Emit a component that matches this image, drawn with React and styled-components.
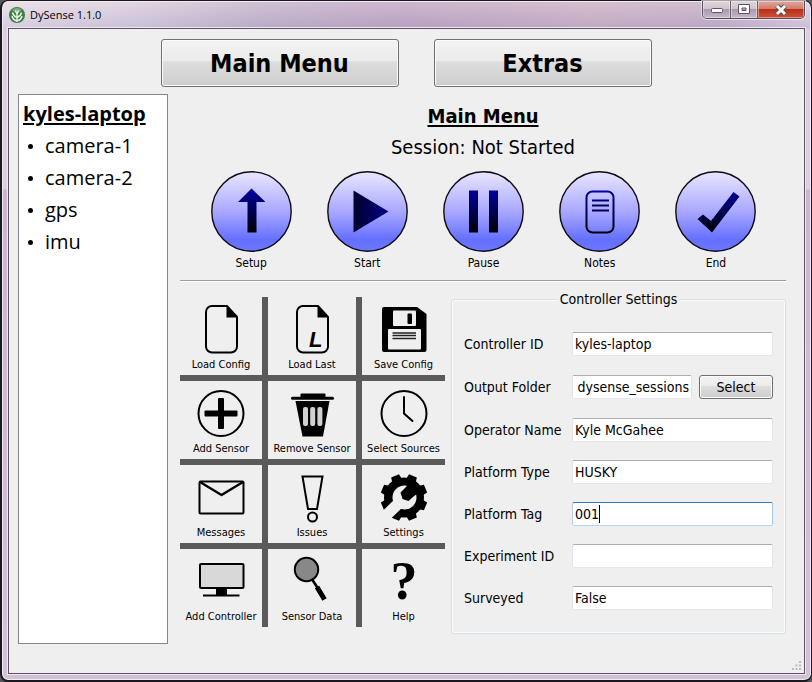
import React, { useId } from 'react';
import styled, { createGlobalStyle, css } from 'styled-components';

const tahoma = '"DejaVu Sans Condensed", "DejaVu Sans", Tahoma, sans-serif';
const segoe = '"Open Sans", "Noto Sans", "Segoe UI", sans-serif';
const face = '#efefef';
const rule = '#5a5a5a';

const GlobalStyle = createGlobalStyle`
  *, *::before, *::after { box-sizing: border-box; }
  body { margin: 0; background: #55585a; font-family: ${tahoma}; color: #000; }
  button, input { font-family: inherit; color: inherit; }
`;

const Window = styled.div`
  display: flex;
  flex-direction: column;
  min-height: 100vh;
  padding: 0 6px 6px;
  border: 1px solid #1c1820;
  border-width: 1px 1px 2px 2px;
  border-radius: 8px;
  box-shadow: inset 0 0 0 1px #f1eaf3;
  background:
    linear-gradient(180deg, rgba(255, 240, 245, 0.3), rgba(170, 160, 205, 0.25)) top / 100% 28px no-repeat,
    linear-gradient(90deg, #e4dce6 0, #d5cbd9 16%, #bcaec5 32%, #b9a0bd 50%, #c6abbd 72%, #bfa9bf 88%, #d6cadd 100%) top / 100% 28px no-repeat,
    linear-gradient(180deg, #dccfe0 0, #dccfe0 188px, #cbb6cf 189px, #d3c2d7 100%);
`;

const TitleBar = styled.header`
  display: flex;
  align-items: flex-start;
  justify-content: space-between;
  height: 27px;
`;

const Caption = styled.h1`
  display: flex;
  align-items: center;
  gap: 5px;
  height: 27px;
  margin: 0;
  padding-left: 1px;
  font: 400 11px/16px ${segoe};
`;

const Controls = styled.div`
  display: flex;
  height: 18px;
  border: 1px solid #544a58;
  border-top: 0;
  border-radius: 0 0 5px 5px;
  box-shadow: 0 0 0 1px rgba(255, 255, 255, 0.6);
  overflow: hidden;
`;

const ControlButton = styled.button`
  display: grid;
  place-items: center;
  width: ${(p) => (p.$close ? 47 : 27)}px;
  padding: 0;
  border: 0;
  border-left: ${(p) => (p.$first ? '0' : '1px solid #6a5f6e')};
  box-shadow: inset 0 0 0 1px rgba(255, 255, 255, 0.4);
  background: ${(p) =>
    p.$close
      ? 'linear-gradient(#e0aaa0 0, #d2786a 48%, #b8301a 50%, #cf5038 100%)'
      : 'linear-gradient(#e2d6dc 0, #cfc2cd 48%, #a99bac 50%, #c3b7cc 100%)'};
`;

const Client = styled.main`
  display: flex;
  flex: 1;
  flex-direction: column;
  gap: 7px;
  padding: 10px 18px 29px 9px;
  position: relative;
  border: 1px solid #5f5265;
  box-shadow: 0 0 0 1px #efe8f2;
  background: ${face};
`;

const PushButton = styled.button`
  border: 1px solid #707070;
  border-radius: 3px;
  padding: 0;
  box-shadow: inset 0 0 0 1px #fbfbfb;
  background: linear-gradient(#f3f3f3 0, #ebebeb 46%, #dddddd 47%, #cecece 100%);
  font-size: 14px;
`;

const Tabs = styled.nav`
  display: flex;
  justify-content: center;
  gap: 35px;
  padding-left: 8px;
`;

const TabButton = styled(PushButton)`
  width: ${(p) => p.$width}px;
  height: 48px;
  font-size: 25px;
  font-weight: 700;
`;

const Body = styled.div`
  display: flex;
  flex: 1;
  gap: 12px;
`;

const DevicePanel = styled.aside`
  width: 150px;
  padding: 3px 4px;
  border: 1px solid #828790;
  background: #fff;
  font: 400 20px/32px ${segoe};
`;

const DeviceHost = styled.h2`
  margin: 0;
  font-size: 20px;
  line-height: 32px;
  font-weight: 700;
  text-decoration: underline;
  text-decoration-thickness: 2px;
  text-underline-offset: 2px;
`;

const DeviceList = styled.ul`
  margin: 0;
  padding: 0;
  list-style: none;
`;

const Device = styled.li`
  display: flex;
  align-items: center;
  gap: 12px;
  padding-left: 5px;

  &::before {
    content: '';
    width: 5px;
    height: 5px;
    border-radius: 50%;
    background: #000;
  }
`;

const Content = styled.section`
  flex: 1;
  min-width: 0;
  padding-top: 8px;
`;

const Heading = styled.h2`
  margin: 0;
  font-size: 20px;
  line-height: 28px;
  text-align: center;
  text-decoration: underline;
  text-decoration-thickness: 2px;
  text-underline-offset: 2px;
`;

const Status = styled.p`
  margin: 0;
  font-size: 20px;
  line-height: 34px;
  text-align: center;
`;

const ActionRow = styled.div`
  display: grid;
  grid-template-columns: repeat(5, 1fr);
  padding: 7px 12px 8px 13px;
`;

const ActionButton = styled.button`
  display: flex;
  flex-direction: column;
  align-items: center;
  gap: 2px;
  padding: 0;
  border: 0;
  background: none;
  font-size: 12px;
  line-height: 18px;

  svg { display: block; }
`;

const Divider = styled.hr`
  height: 2px;
  margin: 0 0 8px;
  border: 0;
  border-top: 1px solid #9c9c9c;
  background: #fdfdfd;
`;

const Lower = styled.div`
  display: flex;
  align-items: flex-start;
  gap: 6px;
`;

const MenuGrid = styled.div`
  display: grid;
  grid-template-columns: 82px 88px 83px;
  gap: 6px;
  margin-top: 7px;
  background: ${rule};
`;

const MenuButton = styled.button`
  display: flex;
  flex-direction: column;
  align-items: center;
  gap: 2px;
  height: 78px;
  padding: 8px 0 0;
  border: 0;
  background: ${face};
  font-size: 11px;
  line-height: 16px;
  white-space: nowrap;

  svg { display: block; overflow: visible; }
`;

const Group = styled.fieldset`
  flex: 1;
  min-width: 0;
  margin: 0;
  padding: 24px 12px 23px;
  border: 1px solid #d5dfe5;
  border-radius: 3px;
  box-shadow: inset 0 0 0 1px #fcfcfc;
`;

const GroupTitle = styled.legend`
  margin: 0 auto;
  padding: 0 3px;
  background: ${face};
  font-size: 14px;
  line-height: 18px;
`;

const Form = styled.div`
  display: grid;
  grid-template-columns: auto 1fr;
  grid-template-rows: 24px 26px;
  grid-auto-rows: 24px;
  align-items: center;
  gap: 18px 6px;
`;

const FieldLabel = styled.label`
  min-width: 102px;
  font-size: 14px;
  line-height: 24px;
  white-space: nowrap;
`;

const FieldRow = styled.div`
  display: flex;
  gap: 7px;
  min-width: 0;
`;

const caret = css`
  border-color: #3d7bad #a4c9e3 #b7d9ed #b5cfe7;
  background: linear-gradient(#000, #000) 26px 2px / 1px 18px no-repeat #fff;
`;

const TextBox = styled.input`
  flex: 1;
  width: 100%;
  min-width: 0;
  height: 24px;
  padding: 0 2px;
  border: 1px solid;
  border-color: #abadb3 #e2e3ea #e3e9ef #e2e3ea;
  border-radius: 2px;
  outline: 0;
  background: #fff;
  font-size: 14px;
  text-align: ${(p) => (p.$end ? 'right' : 'left')};
  ${(p) => p.$active && caret}
`;

const SelectButton = styled(PushButton)`
  width: 74px;
  height: 24px;
`;

const Grip = styled.svg`
  position: absolute;
  right: 2px;
  bottom: 2px;
`;

const AppIcon = () => (
  <svg width="16" height="16" viewBox="0 0 16 16" aria-hidden="true">
    <circle cx="8" cy="8" r="8" fill="#3f7d46" />
    <path d="M3 3a8 8 0 0 1 10 0L8 7z" fill="#7fae80" />
    <path d="M8 15V6M8 14C5 13 3.500 11.500 3 9M8 14c3-1 4.500-2.500 5-5M8 10.500C5.500 9.500 4 8 3.500 5.500M8 10.500c2.500-1 4-2.500 4.500-5M8 7L6.500 3.500M8 7l1.500-3.500" fill="none" stroke="#e3efe2" strokeWidth="1.500" />
  </svg>
);

const glyphs = {
  Setup: (f) => <path d="M40.500 17.500L54.500 31H45.500V61.500H36.500V31H27z" fill={f} />,
  Start: (f) => <path d="M26.500 19.500L61.500 40.500L26.500 61.500z" fill={f} />,
  Pause: (f) => <path d="M26 19.500h9v42h-9zM46 19.500h9v42h-9z" fill={f} />,
  Notes: (f) => (
    <>
      <rect x="27.500" y="20.500" width="27" height="41" rx="6" fill="none" stroke={f} strokeWidth="2" />
      <path d="M33 28.500h17v2H33zM33 33.500h17v2H33zM33 38.500h17v2H33z" fill={f} />
    </>
  ),
  End: (f) => <path d="M22.500 48L28 43.500L36 50L58.500 21L64.500 25.500L37 61.500z" fill={f} />,
};

function RoundIcon({ name }) {
  const id = useId();
  const across = name === 'Start';
  return (
    <svg width="81" height="81" viewBox="0 0 81 81" aria-hidden="true">
      <defs>
        <linearGradient id={`${id}b`} x1="0" y1="0" x2="0" y2="1">
          <stop offset="0" stopColor="#e9e6ff" />
          <stop offset="0.5" stopColor="#a9a8ff" />
          <stop offset="0.85" stopColor="#6570ff" />
          <stop offset="1" stopColor="#6b78ff" />
        </linearGradient>
        <linearGradient id={`${id}g`} gradientUnits="userSpaceOnUse" x1={across ? 26 : 0} y1={across ? 0 : 19} x2={across ? 62 : 0} y2={across ? 0 : 60}>
          <stop offset="0" stopColor={across ? '#00002c' : '#0000a0'} />
          <stop offset="1" stopColor={across ? '#000088' : '#000008'} />
        </linearGradient>
      </defs>
      <circle cx="40.500" cy="40.500" r="39.700" fill={`url(#${id}b)`} stroke="#0c0c14" strokeWidth="1.400" />
      {glyphs[name](`url(#${id}g)`)}
    </svg>
  );
}

const Page = () => (
  <>
    <path d="M16 1H31L41 12V41.500a6 6 0 0 1-6 6H16a6 6 0 0 1-6-6V7a6 6 0 0 1 6-6z" fill="none" stroke="#000" strokeWidth="2" />
    <path d="M30.500 1V12.500H41z" />
  </>
);

const drawings = {
  'Load Config': <Page />,
  'Load Last': (
    <>
      <Page />
      <text x="22" y="42" fontFamily="Liberation Sans, Arial, sans-serif" fontSize="22" fontWeight="700" fontStyle="italic">L</text>
    </>
  ),
  'Save Config': (
    <>
      <path d="M5 2H38L47.500 9V45a2 2 0 0 1-2 2H5a2 2 0 0 1-2-2V4a2 2 0 0 1 2-2z" />
      <rect x="14" y="5.500" width="23" height="15.500" rx="1" fill={face} />
      <rect x="28.500" y="8.500" width="4.500" height="10.500" rx="1" />
      <rect x="9" y="24" width="33" height="20.500" rx="1" fill={face} />
      <path d="M13.500 28h23.500M13.500 30.500h23.500M13.500 33.500h23.500" stroke="#222" strokeWidth="1.300" />
    </>
  ),
  'Add Sensor': (
    <>
      <circle cx="25" cy="24.500" r="22.500" fill="none" stroke="#000" strokeWidth="2" />
      <rect x="8.500" y="21.500" width="33" height="6" rx="1" />
      <rect x="22" y="9" width="6" height="31" rx="1" />
    </>
  ),
  'Remove Sensor': (
    <>
      <rect x="13.500" y="4.500" width="25" height="4" rx="1" />
      <rect x="4" y="7.800" width="43" height="3" rx="1.500" />
      <path d="M8.500 12H42.500L36 47.500H15.500z" />
      <g fill="#d0d0d0">
        <rect x="16" y="18" width="5" height="19" rx="2" />
        <rect x="23.200" y="18" width="5" height="19" rx="2" />
        <rect x="30.400" y="18" width="5" height="19" rx="2" />
      </g>
    </>
  ),
  'Select Sources': (
    <g fill="none" stroke="#000" strokeWidth="2" strokeLinecap="round">
      <circle cx="25" cy="24.500" r="22.500" />
      <path d="M25 8V24.500L33.500 32" />
    </g>
  ),
  Messages: (
    <g fill="none" stroke="#000" strokeWidth="2" strokeLinejoin="round">
      <rect x="3.500" y="8.500" width="44" height="32" rx="1" />
      <path d="M4 9L25.500 22L47 9" strokeWidth="2.400" />
    </g>
  ),
  Issues: (
    <g fill="none" stroke="#000" strokeWidth="2">
      <path d="M15.500 3.500H35.500L30 36H21z" />
      <circle cx="25.500" cy="44" r="4.500" />
    </g>
  ),
  Settings: (
    <>
      <circle cx="25" cy="24.500" r="20" />
      {[0, 1, 2, 3, 4, 5, 6, 7].map((n) => (
        <path key={n} d="M19.500 8L20.800 1.200H29.200L30.500 8z" transform={`rotate(${n * 45 + 22.500} 25 24.500)`} />
      ))}
      <circle cx="25.500" cy="24.500" r="12" fill={face} />
      <path d="M16.500 25.500L25 33L9 48.500L1 40.500z" fill={face} />
      <path d="M21.500 19.500L26.500 14.500L31 9L42 18L34.500 23.500L29.500 28L23.500 26z" />
    </>
  ),
  'Add Controller': (
    <>
      <rect x="4" y="7" width="43.500" height="24" rx="1" fill="#d8d8d8" stroke="#000" strokeWidth="2" />
      <path d="M20 31h11v6.500H43.500v2H7v-2H20z" />
    </>
  ),
  'Sensor Data': (
    <g stroke="#000" strokeLinecap="round">
      <circle cx="19.500" cy="12.500" r="11.700" fill="#888" strokeWidth="2" />
      <path d="M25.500 23L30 30" strokeWidth="2.500" />
      <path d="M30 30L37.500 42.500" strokeWidth="5" strokeLinecap="butt" />
    </g>
  ),
  Help: (
    <text x="25" y="42" textAnchor="middle" fontFamily="Liberation Serif, Times New Roman, serif" fontSize="54" fontWeight="700">?</text>
  ),
};

const devices = ['camera-1', 'camera-2', 'gps', 'imu'];

const fields = [
  { id: 'controller', label: 'Controller ID', value: 'kyles-laptop' },
  { id: 'output', label: 'Output Folder', value: 'dysense_sessions', browse: true },
  { id: 'operator', label: 'Operator Name', value: 'Kyle McGahee' },
  { id: 'type', label: 'Platform Type', value: 'HUSKY' },
  { id: 'tag', label: 'Platform Tag', value: '001', active: true },
  { id: 'experiment', label: 'Experiment ID', value: '' },
  { id: 'surveyed', label: 'Surveyed', value: 'False' },
];

export default function App() {
  return (
    <>
      <GlobalStyle />
      <Window>
        <TitleBar>
          <Caption><AppIcon />DySense 1.1.0</Caption>
          <Controls>
            <ControlButton $first aria-label="Minimize">
              <svg width="14" height="8" viewBox="0 0 14 8"><rect x="1.500" y="2.500" width="11" height="4" rx="1" fill="#fff" stroke="#5b5464" /></svg>
            </ControlButton>
            <ControlButton aria-label="Maximize">
              <svg width="12" height="11" viewBox="0 0 12 11">
                <path d="M.5.500h11v9H.5zM4 4v2.500h4V4z" fill="#fff" fillRule="evenodd" stroke="#5b5464" />
              </svg>
            </ControlButton>
            <ControlButton $close aria-label="Close">
              <svg width="14" height="12" viewBox="0 0 14 12">
                <path d="M3 2l8 8M11 2L3 10" stroke="#5b4650" strokeWidth="5" />
                <path d="M3 2l8 8M11 2L3 10" stroke="#fff" strokeWidth="3" />
              </svg>
            </ControlButton>
          </Controls>
        </TitleBar>
        <Client>
          <Tabs>
            <TabButton $width={238}>Main Menu</TabButton>
            <TabButton $width={218}>Extras</TabButton>
          </Tabs>
          <Body>
            <DevicePanel>
              <DeviceHost>kyles-laptop</DeviceHost>
              <DeviceList>
                {devices.map((d) => <Device key={d}>{d}</Device>)}
              </DeviceList>
            </DevicePanel>
            <Content>
              <Heading>Main Menu</Heading>
              <Status>Session: Not Started</Status>
              <ActionRow>
                {Object.keys(glyphs).map((name) => (
                  <ActionButton key={name}><RoundIcon name={name} />{name}</ActionButton>
                ))}
              </ActionRow>
              <Divider />
              <Lower>
                <MenuGrid>
                  {Object.entries(drawings).map(([name, art]) => (
                    <MenuButton key={name}>
                      <svg width="50" height="50" viewBox="0 0 50 50" aria-hidden="true">{art}</svg>
                      {name}
                    </MenuButton>
                  ))}
                </MenuGrid>
                <Group>
                  <GroupTitle>Controller Settings</GroupTitle>
                  <Form>
                    {fields.map((f) => (
                      <React.Fragment key={f.id}>
                        <FieldLabel htmlFor={f.id}>{f.label}</FieldLabel>
                        <FieldRow>
                          <TextBox id={f.id} defaultValue={f.value} $active={f.active} $end={f.browse} />
                          {f.browse && <SelectButton>Select</SelectButton>}
                        </FieldRow>
                      </React.Fragment>
                    ))}
                  </Form>
                </Group>
              </Lower>
            </Content>
          </Body>
          <Grip width="10" height="10" viewBox="0 0 10 10" fill="#bdbdbd" aria-hidden="true">
            <path d="M7 0h2v2H7zM7 3.500h2v2H7zM7 7h2v2H7zM3.500 3.500h2v2h-2zM3.500 7h2v2h-2zM0 7h2v2H0z" />
          </Grip>
        </Client>
      </Window>
    </>
  );
}
